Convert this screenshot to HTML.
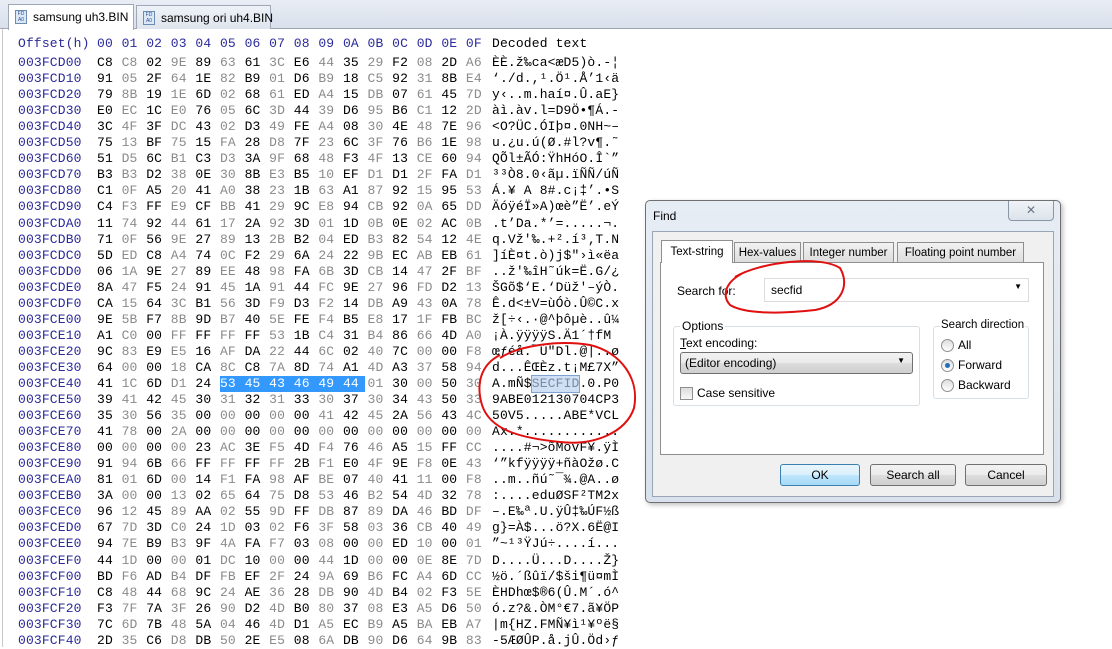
<!DOCTYPE html>
<html><head><meta charset="utf-8">
<style>
*{margin:0;padding:0;box-sizing:border-box}
body{width:1112px;height:647px;overflow:hidden;background:#fff;position:relative;font-family:"Liberation Sans",sans-serif}
.tabbar{position:absolute;left:0;top:0;width:1112px;height:29px;background:linear-gradient(#e9edf4,#d9e0ec);border-bottom:1px solid #a0a8b8}
.ftab{position:absolute;top:5px;height:24px;font-size:12px;padding:5px 0 0 24px;border:1px solid #a0a8b8;border-bottom:none;white-space:nowrap}
.ftab i{position:absolute;left:6px;top:5px;width:12px;height:14px;border:1px solid #6a8cb0;background:#dbe8f6;font-style:normal;font-size:5px;color:#3050a0;line-height:6px;text-align:center}
.lb{position:absolute;left:2px;top:29px;width:1px;height:618px;background:#c8c8c8}
.hex{position:absolute;left:18px;top:36px;font-family:"Liberation Mono",monospace;font-size:13px;letter-spacing:0.15px}
.r{height:16.06px;line-height:16px;white-space:nowrap}
.r span{display:inline-block}
.o{width:79px;color:#2a2a9a}
.r b{font-weight:normal;display:inline-block;width:24.6px;color:#000}
.r b:nth-of-type(even){color:#8a8a8a}
.d{position:absolute;left:474px;color:#000}
.hd{color:#2a2a9a}
.hd b{color:#2a2a9a!important}
.sel{background:#3399ff;color:#fff!important}
.dlg{position:absolute;left:645px;top:200px;width:416px;height:303px;border:1px solid #707070;border-radius:5px;background:linear-gradient(#e7edf5,#d8e1ec);box-shadow:2px 2px 5px rgba(0,0,0,.25)}
.in{position:absolute;left:6px;top:30px;width:402px;height:266px;background:#f0f0f0;border:1px solid #9aa6b6}
.f{position:absolute;font-size:12px;color:#000;white-space:nowrap}
.page{position:absolute;left:7px;top:30px;width:384px;height:193px;background:#fff;border:1px solid #8e8f8f}
.t{position:absolute;top:10px;height:21px;border:1px solid #8e8f8f;border-bottom:none;background:linear-gradient(#f2f2f2,#dcdcdc);font-size:11.5px;padding:4px 0 0;text-align:center;white-space:nowrap}
.grp{position:absolute;border:1px solid #d5dfe5;border-radius:3px}
.btn{position:absolute;height:22px;border:1px solid #707070;border-radius:3px;background:linear-gradient(#f2f2f2,#ebebeb 50%,#dddddd 50%,#cfcfcf);font-size:12px;text-align:center;line-height:20px}
.rad{position:absolute;width:13px;height:13px;border-radius:50%;border:1px solid #8e8f8f;background:linear-gradient(#ddd,#fff)}
</style></head><body>
<div class="tabbar"></div>
<div class="ftab" style="left:8px;width:126px;background:#fff;top:4px;height:26px"><i>FD<br>A0</i>samsung uh3.BIN</div>
<div class="ftab" style="left:136px;width:135px;background:linear-gradient(#eef2f8,#dfe5ee)"><i>FD<br>A0</i>samsung ori uh4.BIN</div>
<div class="lb"></div>
<div class="hex">
<div class="r hd"><span class="o">Offset(h)</span><b>00</b><b>01</b><b>02</b><b>03</b><b>04</b><b>05</b><b>06</b><b>07</b><b>08</b><b>09</b><b>0A</b><b>0B</b><b>0C</b><b>0D</b><b>0E</b><b>0F</b><span class="d">Decoded text</span></div>
<div style="height:3px"></div>
<div class="r"><span class="o">003FCD00</span><b>C8</b><b>C8</b><b>02</b><b>9E</b><b>89</b><b>63</b><b>61</b><b>3C</b><b>E6</b><b>44</b><b>35</b><b>29</b><b>F2</b><b>08</b><b>2D</b><b>A6</b><span class="d">ÈÈ.ž‰ca&lt;æD5)ò.-¦</span></div>
<div class="r"><span class="o">003FCD10</span><b>91</b><b>05</b><b>2F</b><b>64</b><b>1E</b><b>82</b><b>B9</b><b>01</b><b>D6</b><b>B9</b><b>18</b><b>C5</b><b>92</b><b>31</b><b>8B</b><b>E4</b><span class="d">‘./d.,¹.Ö¹.Å’1‹ä</span></div>
<div class="r"><span class="o">003FCD20</span><b>79</b><b>8B</b><b>19</b><b>1E</b><b>6D</b><b>02</b><b>68</b><b>61</b><b>ED</b><b>A4</b><b>15</b><b>DB</b><b>07</b><b>61</b><b>45</b><b>7D</b><span class="d">y‹..m.haí¤.Û.aE}</span></div>
<div class="r"><span class="o">003FCD30</span><b>E0</b><b>EC</b><b>1C</b><b>E0</b><b>76</b><b>05</b><b>6C</b><b>3D</b><b>44</b><b>39</b><b>D6</b><b>95</b><b>B6</b><b>C1</b><b>12</b><b>2D</b><span class="d">àì.àv.l=D9Ö•¶Á.-</span></div>
<div class="r"><span class="o">003FCD40</span><b>3C</b><b>4F</b><b>3F</b><b>DC</b><b>43</b><b>02</b><b>D3</b><b>49</b><b>FE</b><b>A4</b><b>08</b><b>30</b><b>4E</b><b>48</b><b>7E</b><b>96</b><span class="d">&lt;O?ÜC.ÓIþ¤.0NH~–</span></div>
<div class="r"><span class="o">003FCD50</span><b>75</b><b>13</b><b>BF</b><b>75</b><b>15</b><b>FA</b><b>28</b><b>D8</b><b>7F</b><b>23</b><b>6C</b><b>3F</b><b>76</b><b>B6</b><b>1E</b><b>98</b><span class="d">u.¿u.ú(Ø.#l?v¶.˜</span></div>
<div class="r"><span class="o">003FCD60</span><b>51</b><b>D5</b><b>6C</b><b>B1</b><b>C3</b><b>D3</b><b>3A</b><b>9F</b><b>68</b><b>48</b><b>F3</b><b>4F</b><b>13</b><b>CE</b><b>60</b><b>94</b><span class="d">QÕl±ÃÓ:ŸhHóO.Î`”</span></div>
<div class="r"><span class="o">003FCD70</span><b>B3</b><b>B3</b><b>D2</b><b>38</b><b>0E</b><b>30</b><b>8B</b><b>E3</b><b>B5</b><b>10</b><b>EF</b><b>D1</b><b>D1</b><b>2F</b><b>FA</b><b>D1</b><span class="d">³³Ò8.0‹ãµ.ïÑÑ/úÑ</span></div>
<div class="r"><span class="o">003FCD80</span><b>C1</b><b>0F</b><b>A5</b><b>20</b><b>41</b><b>A0</b><b>38</b><b>23</b><b>1B</b><b>63</b><b>A1</b><b>87</b><b>92</b><b>15</b><b>95</b><b>53</b><span class="d">Á.¥ A 8#.c¡‡’.•S</span></div>
<div class="r"><span class="o">003FCD90</span><b>C4</b><b>F3</b><b>FF</b><b>E9</b><b>CF</b><b>BB</b><b>41</b><b>29</b><b>9C</b><b>E8</b><b>94</b><b>CB</b><b>92</b><b>0A</b><b>65</b><b>DD</b><span class="d">ÄóÿéÏ»A)œè”Ë’.eÝ</span></div>
<div class="r"><span class="o">003FCDA0</span><b>11</b><b>74</b><b>92</b><b>44</b><b>61</b><b>17</b><b>2A</b><b>92</b><b>3D</b><b>01</b><b>1D</b><b>0B</b><b>0E</b><b>02</b><b>AC</b><b>0B</b><span class="d">.t’Da.*’=.....¬.</span></div>
<div class="r"><span class="o">003FCDB0</span><b>71</b><b>0F</b><b>56</b><b>9E</b><b>27</b><b>89</b><b>13</b><b>2B</b><b>B2</b><b>04</b><b>ED</b><b>B3</b><b>82</b><b>54</b><b>12</b><b>4E</b><span class="d">q.Vž'‰.+².í³‚T.N</span></div>
<div class="r"><span class="o">003FCDC0</span><b>5D</b><b>ED</b><b>C8</b><b>A4</b><b>74</b><b>0C</b><b>F2</b><b>29</b><b>6A</b><b>24</b><b>22</b><b>9B</b><b>EC</b><b>AB</b><b>EB</b><b>61</b><span class="d">]íÈ¤t.ò)j$"›ì«ëa</span></div>
<div class="r"><span class="o">003FCDD0</span><b>06</b><b>1A</b><b>9E</b><b>27</b><b>89</b><b>EE</b><b>48</b><b>98</b><b>FA</b><b>6B</b><b>3D</b><b>CB</b><b>14</b><b>47</b><b>2F</b><b>BF</b><span class="d">..ž'‰îH˜úk=Ë.G/¿</span></div>
<div class="r"><span class="o">003FCDE0</span><b>8A</b><b>47</b><b>F5</b><b>24</b><b>91</b><b>45</b><b>1A</b><b>91</b><b>44</b><b>FC</b><b>9E</b><b>27</b><b>96</b><b>FD</b><b>D2</b><b>13</b><span class="d">ŠGõ$‘E.‘Düž'–ýÒ.</span></div>
<div class="r"><span class="o">003FCDF0</span><b>CA</b><b>15</b><b>64</b><b>3C</b><b>B1</b><b>56</b><b>3D</b><b>F9</b><b>D3</b><b>F2</b><b>14</b><b>DB</b><b>A9</b><b>43</b><b>0A</b><b>78</b><span class="d">Ê.d&lt;±V=ùÓò.Û©C.x</span></div>
<div class="r"><span class="o">003FCE00</span><b>9E</b><b>5B</b><b>F7</b><b>8B</b><b>9D</b><b>B7</b><b>40</b><b>5E</b><b>FE</b><b>F4</b><b>B5</b><b>E8</b><b>17</b><b>1F</b><b>FB</b><b>BC</b><span class="d">ž[÷‹.·@^þôµè..û¼</span></div>
<div class="r"><span class="o">003FCE10</span><b>A1</b><b>C0</b><b>00</b><b>FF</b><b>FF</b><b>FF</b><b>FF</b><b>53</b><b>1B</b><b>C4</b><b>31</b><b>B4</b><b>86</b><b>66</b><b>4D</b><b>A0</b><span class="d">¡À.ÿÿÿÿS.Ä1´†fM </span></div>
<div class="r"><span class="o">003FCE20</span><b>9C</b><b>83</b><b>E9</b><b>E5</b><b>16</b><b>AF</b><b>DA</b><b>22</b><b>44</b><b>6C</b><b>02</b><b>40</b><b>7C</b><b>00</b><b>00</b><b>F8</b><span class="d">œƒéå.¯Ú"Dl.@|..ø</span></div>
<div class="r"><span class="o">003FCE30</span><b>64</b><b>00</b><b>00</b><b>18</b><b>CA</b><b>8C</b><b>C8</b><b>7A</b><b>8D</b><b>74</b><b>A1</b><b>4D</b><b>A3</b><b>37</b><b>58</b><b>94</b><span class="d">d...ÊŒÈz.t¡M£7X”</span></div>
<div class="r"><span class="o">003FCE40</span><b>41</b><b>1C</b><b>6D</b><b>D1</b><b>24</b><b class="sel">53</b><b class="sel">45</b><b class="sel">43</b><b class="sel">46</b><b class="sel">49</b><b class="sel" style="width:22px;margin-right:2.6px">44</b><b>01</b><b>30</b><b>00</b><b>50</b><b>30</b><span class="d">A.mÑ$<span style="background:#cfe0f5;color:#7a8aa0;outline:1px solid #7da2ce">SECFID</span>.0.P0</span></div>
<div class="r"><span class="o">003FCE50</span><b>39</b><b>41</b><b>42</b><b>45</b><b>30</b><b>31</b><b>32</b><b>31</b><b>33</b><b>30</b><b>37</b><b>30</b><b>34</b><b>43</b><b>50</b><b>33</b><span class="d">9ABE012130704CP3</span></div>
<div class="r"><span class="o">003FCE60</span><b>35</b><b>30</b><b>56</b><b>35</b><b>00</b><b>00</b><b>00</b><b>00</b><b>00</b><b>41</b><b>42</b><b>45</b><b>2A</b><b>56</b><b>43</b><b>4C</b><span class="d">50V5.....ABE*VCL</span></div>
<div class="r"><span class="o">003FCE70</span><b>41</b><b>78</b><b>00</b><b>2A</b><b>00</b><b>00</b><b>00</b><b>00</b><b>00</b><b>00</b><b>00</b><b>00</b><b>00</b><b>00</b><b>00</b><b>00</b><span class="d">Ax.*............</span></div>
<div class="r"><span class="o">003FCE80</span><b>00</b><b>00</b><b>00</b><b>00</b><b>23</b><b>AC</b><b>3E</b><b>F5</b><b>4D</b><b>F4</b><b>76</b><b>46</b><b>A5</b><b>15</b><b>FF</b><b>CC</b><span class="d">....#¬&gt;õMôvF¥.ÿÌ</span></div>
<div class="r"><span class="o">003FCE90</span><b>91</b><b>94</b><b>6B</b><b>66</b><b>FF</b><b>FF</b><b>FF</b><b>FF</b><b>2B</b><b>F1</b><b>E0</b><b>4F</b><b>9E</b><b>F8</b><b>0E</b><b>43</b><span class="d">‘”kfÿÿÿÿ+ñàOžø.C</span></div>
<div class="r"><span class="o">003FCEA0</span><b>81</b><b>01</b><b>6D</b><b>00</b><b>14</b><b>F1</b><b>FA</b><b>98</b><b>AF</b><b>BE</b><b>07</b><b>40</b><b>41</b><b>11</b><b>00</b><b>F8</b><span class="d">..m..ñú˜¯¾.@A..ø</span></div>
<div class="r"><span class="o">003FCEB0</span><b>3A</b><b>00</b><b>00</b><b>13</b><b>02</b><b>65</b><b>64</b><b>75</b><b>D8</b><b>53</b><b>46</b><b>B2</b><b>54</b><b>4D</b><b>32</b><b>78</b><span class="d">:....eduØSF²TM2x</span></div>
<div class="r"><span class="o">003FCEC0</span><b>96</b><b>12</b><b>45</b><b>89</b><b>AA</b><b>02</b><b>55</b><b>9D</b><b>FF</b><b>DB</b><b>87</b><b>89</b><b>DA</b><b>46</b><b>BD</b><b>DF</b><span class="d">–.E‰ª.U.ÿÛ‡‰ÚF½ß</span></div>
<div class="r"><span class="o">003FCED0</span><b>67</b><b>7D</b><b>3D</b><b>C0</b><b>24</b><b>1D</b><b>03</b><b>02</b><b>F6</b><b>3F</b><b>58</b><b>03</b><b>36</b><b>CB</b><b>40</b><b>49</b><span class="d">g}=À$...ö?X.6Ë@I</span></div>
<div class="r"><span class="o">003FCEE0</span><b>94</b><b>7E</b><b>B9</b><b>B3</b><b>9F</b><b>4A</b><b>FA</b><b>F7</b><b>03</b><b>08</b><b>00</b><b>00</b><b>ED</b><b>10</b><b>00</b><b>01</b><span class="d">”~¹³ŸJú÷....í...</span></div>
<div class="r"><span class="o">003FCEF0</span><b>44</b><b>1D</b><b>00</b><b>00</b><b>01</b><b>DC</b><b>10</b><b>00</b><b>00</b><b>44</b><b>1D</b><b>00</b><b>00</b><b>0E</b><b>8E</b><b>7D</b><span class="d">D....Ü...D....Ž}</span></div>
<div class="r"><span class="o">003FCF00</span><b>BD</b><b>F6</b><b>AD</b><b>B4</b><b>DF</b><b>FB</b><b>EF</b><b>2F</b><b>24</b><b>9A</b><b>69</b><b>B6</b><b>FC</b><b>A4</b><b>6D</b><b>CC</b><span class="d">½ö.´ßûï/$ši¶ü¤mÌ</span></div>
<div class="r"><span class="o">003FCF10</span><b>C8</b><b>48</b><b>44</b><b>68</b><b>9C</b><b>24</b><b>AE</b><b>36</b><b>28</b><b>DB</b><b>90</b><b>4D</b><b>B4</b><b>02</b><b>F3</b><b>5E</b><span class="d">ÈHDhœ$®6(Û.M´.ó^</span></div>
<div class="r"><span class="o">003FCF20</span><b>F3</b><b>7F</b><b>7A</b><b>3F</b><b>26</b><b>90</b><b>D2</b><b>4D</b><b>B0</b><b>80</b><b>37</b><b>08</b><b>E3</b><b>A5</b><b>D6</b><b>50</b><span class="d">ó.z?&amp;.ÒM°€7.ã¥ÖP</span></div>
<div class="r"><span class="o">003FCF30</span><b>7C</b><b>6D</b><b>7B</b><b>48</b><b>5A</b><b>04</b><b>46</b><b>4D</b><b>D1</b><b>A5</b><b>EC</b><b>B9</b><b>A5</b><b>BA</b><b>EB</b><b>A7</b><span class="d">|m{HZ.FMÑ¥ì¹¥ºë§</span></div>
<div class="r"><span class="o">003FCF40</span><b>2D</b><b>35</b><b>C6</b><b>D8</b><b>DB</b><b>50</b><b>2E</b><b>E5</b><b>08</b><b>6A</b><b>DB</b><b>90</b><b>D6</b><b>64</b><b>9B</b><b>83</b><span class="d">-5ÆØÛP.å.jÛ.Öd›ƒ</span></div>
</div>

<div class="dlg">
  <div class="f" style="left:7px;top:8px">Find</div>
  <div style="position:absolute;left:362px;top:0px;width:46px;height:20px;border:1px solid #8a96a6;border-top:none;border-radius:0 0 4px 4px;background:linear-gradient(#f0f3f7,#dde3ea);text-align:center;font-size:12px;color:#6a7584;line-height:18px">✕</div>
  <div class="in">
    <div class="t" style="left:8px;top:8px;height:23px;width:72px;background:#fff;z-index:2;padding-top:5px">Text-string</div>
    <div class="t" style="left:81px;width:67px">Hex-values</div>
    <div class="t" style="left:150px;width:91px">Integer number</div>
    <div class="t" style="left:244px;width:127px">Floating point number</div>
    <div class="page">
      <div class="f" style="left:16px;top:21px">Search for:</div>
      <div style="position:absolute;left:103px;top:15px;width:265px;height:24px;border:1px solid #dcdcdc;background:#fff;font-size:12px;padding:4px 6px">secfid<span style="position:absolute;right:6px;top:3px;font-size:8px">▼</span></div>
      <div class="grp" style="left:12px;top:63px;width:247px;height:80px"></div>
      <div class="f" style="left:19px;top:56px;background:#fff;padding:0 2px">Options</div>
      <div class="f" style="left:19px;top:73px"><u>T</u>ext encoding:</div>
      <div style="position:absolute;left:19px;top:89px;width:233px;height:22px;border:1px solid #707070;border-radius:3px;background:linear-gradient(#f2f2f2,#ebebeb 50%,#dddddd 50%,#cfcfcf);font-size:12px;padding:3px 4px">(Editor encoding)<span style="position:absolute;right:7px;top:3px;font-size:8px">▼</span></div>
      <div style="position:absolute;left:19px;top:124px;width:13px;height:13px;border:1px solid #8e8f8f;background:linear-gradient(#ddd,#f8f8f8)"></div>
      <div class="f" style="left:36px;top:123px">Case sensitive</div>
      <div class="grp" style="left:272px;top:63px;width:96px;height:73px"></div>
      <div class="f" style="left:279px;top:56px;background:#fff;padding:0 1px;font-size:11.5px">Search direction</div>
      <div class="rad" style="left:280px;top:76px"></div><div class="f" style="left:297px;top:75px">All</div>
      <div class="rad" style="left:280px;top:96px"><div style="position:absolute;left:3px;top:3px;width:5px;height:5px;border-radius:50%;background:#1e6fb8"></div></div><div class="f" style="left:297px;top:95px">Forward</div>
      <div class="rad" style="left:280px;top:116px"></div><div class="f" style="left:297px;top:115px">Backward</div>
    </div>
    <div class="btn" style="left:127px;top:232px;width:80px;border-color:#3c7fb1;background:linear-gradient(#eaf6fd,#d9f0fc 50%,#bee6fd 50%,#a7d9f5)">OK</div>
    <div class="btn" style="left:217px;top:232px;width:86px">Search all</div>
    <div class="btn" style="left:312px;top:232px;width:82px">Cancel</div>
  </div>
</div>

<svg style="position:absolute;left:0;top:0" width="1112" height="647">
<path d="M735 277 C760 262 820 255 840 268 C850 285 842 305 815 310 C780 314 745 314 730 305 C722 296 724 282 745 272" fill="none" stroke="#e01010" stroke-width="2"/>
<path d="M500 358 C520 345 560 340 590 345 C620 352 640 378 634 408 C626 432 595 446 560 442 C520 438 490 430 482 405 C476 385 480 365 500 355" fill="none" stroke="#e01010" stroke-width="2"/>
</svg>
</body></html>
